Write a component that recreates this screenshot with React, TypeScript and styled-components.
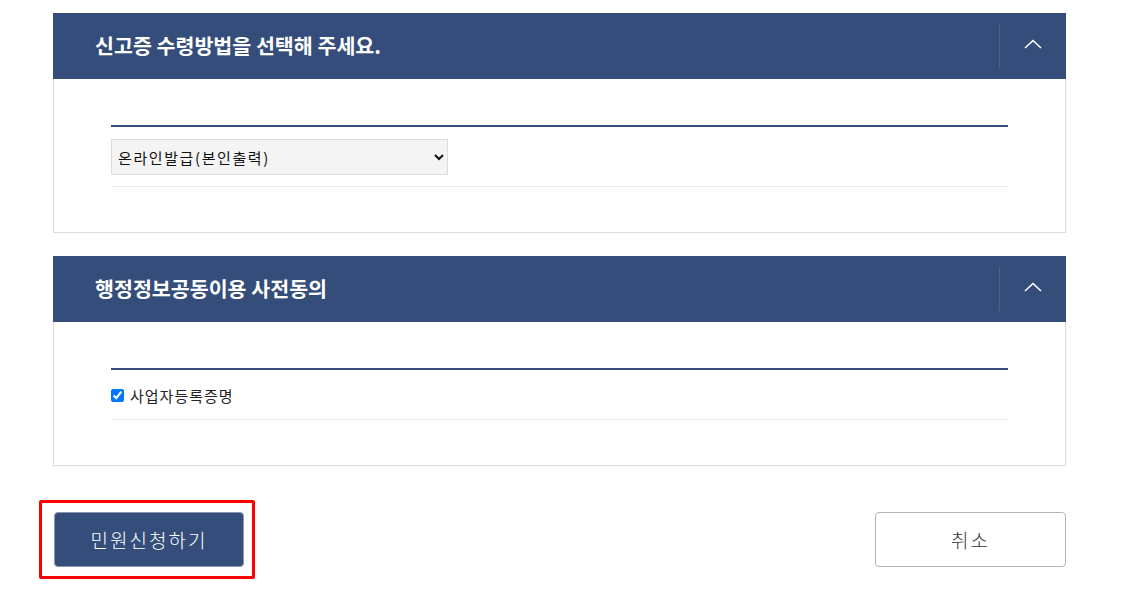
import React, { ReactElement, ReactNode, useState } from 'react';
import styled, { createGlobalStyle } from 'styled-components';

const Colors = {
  navy: '#344d7a',
  navyLine: '#4a628c',
  border: '#dcdcdc',
  lightLine: '#ececec',
  text: '#222222',
  selectBg: '#f4f4f4',
};

const GlobalStyle = createGlobalStyle`
  body {
    margin: 0;
    background: #ffffff;
    font-family: "Noto Sans CJK KR", "Noto Sans", sans-serif;
    color: ${Colors.text};
  }
`;

interface PanelProps {
  title: string;
  children?: ReactNode;
}

const Panel = ({ title, children }: PanelProps): ReactElement => {
  const [open, setOpen] = useState(true);
  return (
    <PanelBox>
      <PanelHeader>
        <PanelTitle>{title}</PanelTitle>
        <ToggleButton onClick={() => setOpen(!open)} aria-label="toggle">
          <svg width="18" height="10" viewBox="0 0 18 10" fill="none">
            <path d="M1 9L9 1.5L17 9" stroke="#ffffff" strokeWidth="1.6" />
          </svg>
        </ToggleButton>
      </PanelHeader>
      {open && <PanelBody>{children}</PanelBody>}
    </PanelBox>
  );
};

export default function App(): ReactElement {
  return (
    <>
      <GlobalStyle />
      <Page>
        <Panel title="신고증 수령방법을 선택해 주세요.">
          <FieldTable>
            <FieldRow>
              <Select defaultValue="online">
                <option value="online">온라인발급(본인출력)</option>
                <option value="visit">방문수령</option>
                <option value="post">우편수령</option>
              </Select>
            </FieldRow>
          </FieldTable>
        </Panel>
        <Panel title="행정정보공동이용 사전동의">
          <FieldTable>
            <FieldRow>
              <CheckLabel>
                <Checkbox type="checkbox" defaultChecked />
                사업자등록증명
              </CheckLabel>
            </FieldRow>
          </FieldTable>
        </Panel>
        <ButtonRow>
          <Highlight>
            <PrimaryButton>민원신청하기</PrimaryButton>
          </Highlight>
          <SecondaryButton>취소</SecondaryButton>
        </ButtonRow>
      </Page>
    </>
  );
}

const Page = styled.div`
  width: 1013px;
  padding: 13px 0 0 53px;
  display: flex;
  flex-direction: column;
  gap: 23px;
`;

const PanelBox = styled.section`
  display: flex;
  flex-direction: column;
`;

const PanelHeader = styled.div`
  height: 66px;
  background: ${Colors.navy};
  display: flex;
  align-items: center;
  padding-left: 42px;
`;

const PanelTitle = styled.h2`
  flex: 1;
  margin: 0 0 2px;
  font-size: 20.6px;
  font-weight: 700;
  color: #ffffff;
  letter-spacing: 0;
`;

const ToggleButton = styled.button`
  width: 67px;
  height: 44px;
  border: 0;
  border-left: 1px solid ${Colors.navyLine};
  background: transparent;
  padding: 0 0 4px;
  display: flex;
  align-items: center;
  justify-content: center;
  cursor: pointer;
`;

const PanelBody = styled.div`
  border: 1px solid ${Colors.border};
  border-top: 0;
  padding: 46px 57px 45px;
`;

const FieldTable = styled.div`
  border-top: 2px solid ${Colors.navy};
`;

const FieldRow = styled.div`
  padding: 12px 0 11px;
  border-bottom: 1px solid ${Colors.lightLine};
  display: flex;
  align-items: center;
  min-height: 25px;
`;

const Select = styled.select`
  width: 337px;
  height: 36px;
  background: ${Colors.selectBg};
  border: 1px solid ${Colors.border};
  border-radius: 0;
  font-family: "Noto Sans CJK KR", "Noto Sans", sans-serif;
  font-size: 15px;
  letter-spacing: 1.6px;
  color: #111111;
  padding: 0 6px 0 2px;
`;

const CheckLabel = styled.label`
  height: 26px;
  display: flex;
  align-items: center;
  gap: 6px;
  font-size: 15px;
  letter-spacing: 1px;
  color: ${Colors.text};
`;

const Checkbox = styled.input`
  width: 13px;
  height: 13px;
  margin: 0;
`;

const ButtonRow = styled.div`
  margin-top: 11px;
  display: flex;
  justify-content: space-between;
  align-items: center;
`;

const Highlight = styled.div`
  margin-left: -14px;
  padding: 9px 8px 9px 12px;
  border: 3px solid #ff0000;
  border-radius: 2px;
  display: flex;
`;

const BaseButton = styled.button`
  height: 55px;
  border-radius: 4px;
  font-family: "Noto Sans CJK KR", "Noto Sans", sans-serif;
  font-size: 19px;
  font-weight: 300;
  letter-spacing: 2px;
  cursor: pointer;
`;

const PrimaryButton = styled(BaseButton)`
  width: 190px;
  background: ${Colors.navy};
  color: #ffffff;
  border: 1px solid #8a96aa;
`;

const SecondaryButton = styled(BaseButton)`
  width: 191px;
  background: #ffffff;
  color: #333333;
  border: 1px solid #b4b4b4;
`;
